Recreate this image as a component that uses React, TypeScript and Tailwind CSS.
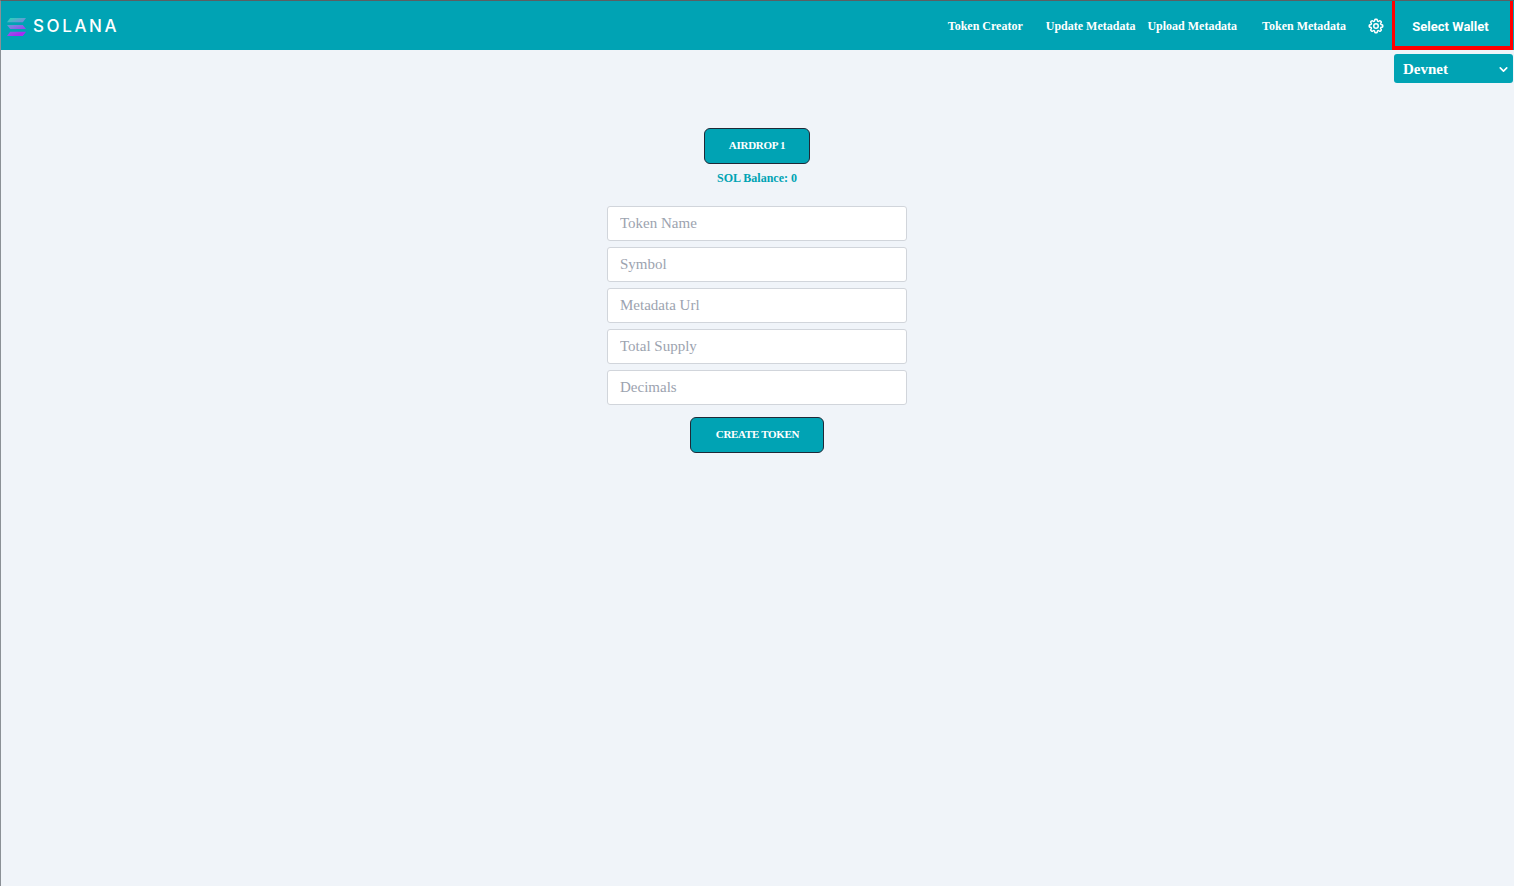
import { ChevronDown } from "lucide-react";
import { HiOutlineCog8Tooth } from "react-icons/hi2";

const SERIF = "font-['Liberation_Serif','Times_New_Roman',serif]";

function Logo() {
    return (
        <a href="#" className="flex items-center gap-[7px] pl-[6px] pt-[2px]">
            <svg width="19" height="18" viewBox="0 0 18 17">
                <defs>
                    <linearGradient id="sol" x1="0" y1="0" x2="0.4" y2="1">
                        <stop offset="0" stopColor="#1fe0b4" />
                        <stop offset="0.5" stopColor="#7d80e0" />
                        <stop offset="1" stopColor="#a82bf2" />
                    </linearGradient>
                </defs>
                <path d="M3 0H18L15 4H0Z M0 6.5H15L18 10.5H3Z M3 13H18L15 17H0Z" fill="url(#sol)" />
            </svg>
            <span className="font-['Inter',sans-serif] text-[17px] leading-none font-medium text-white tracking-[2.6px]">SOLANA</span>
        </a>
    );
}

function Header() {
    return (
        <header className="flex h-[49px] items-center justify-between bg-[#00a3b4]">
            <Logo />
            <nav className={`flex h-full items-center text-[12px] font-bold text-white ${SERIF}`}>
                <a href="#" className="mr-[23px]">Token Creator</a>
                <a href="#" className="mr-[12px]">Update Metadata</a>
                <a href="#" className="mr-[25px]">Upload Metadata</a>
                <a href="#" className="mr-[21px]">Token Metadata</a>
                <HiOutlineCog8Tooth size={18} strokeWidth={2} className="mr-[7px]" />
                <button className="mr-px h-[49px] w-[121px] border-x-[3px] border-b-[4px] border-[#f00] bg-[#00a3b4] pr-[4px] pt-[7px] font-['Roboto',sans-serif] text-[13px] font-bold text-white">
                    Select Wallet
                </button>
            </nav>
        </header>
    );
}

function TextField({ placeholder }: { placeholder: string }) {
    return (
        <input
            placeholder={placeholder}
            className={`h-[35px] w-[300px] rounded-[3px] border border-[#d1d5db] bg-white px-[12.5px] text-[15px] outline-none placeholder:text-[#9ca3af] ${SERIF}`}
        />
    );
}

export default function App() {
    return (
        <div className="min-h-[886px] border-l border-l-[#8b9096] border-t border-t-[#5a5f63] bg-[#f0f4f9]">
            <Header />
            <div className="flex justify-end pr-[1px] pt-[4px]">
                <div className={`flex h-[29px] w-[119px] items-center justify-between rounded-[3px] bg-[#00a3b4] pl-[9px] pr-[3px] pt-[1px] text-[15px] font-bold text-white ${SERIF}`}>
                    Devnet
                    <ChevronDown size={13} strokeWidth={3} />
                </div>
            </div>
            <main className={`flex flex-col items-center pr-[2px] pt-[45px] ${SERIF}`}>
                <button className="h-[36px] w-[106px] rounded-[6px] border border-[#1f2937] bg-[#00a3b4] pb-[2px] pl-[1px] text-[11px] font-bold tracking-[-0.3px] text-white">
                    AIRDROP 1
                </button>
                <p className="mt-[6px] pl-[1px] text-[12px] leading-[16px] font-bold text-[#00a3b4]">SOL Balance: 0</p>
                <div className="mt-[20px] flex flex-col gap-[6px]">
                    <TextField placeholder="Token Name" />
                    <TextField placeholder="Symbol" />
                    <TextField placeholder="Metadata Url" />
                    <TextField placeholder="Total Supply" />
                    <TextField placeholder="Decimals" />
                </div>
                <button className="mt-[12px] h-[36px] w-[134px] rounded-[6px] border border-[#1f2937] bg-[#00a3b4] pb-[2px] pl-[2px] text-[11px] font-bold tracking-[-0.3px] text-white">
                    CREATE TOKEN
                </button>
            </main>
        </div>
    );
}
